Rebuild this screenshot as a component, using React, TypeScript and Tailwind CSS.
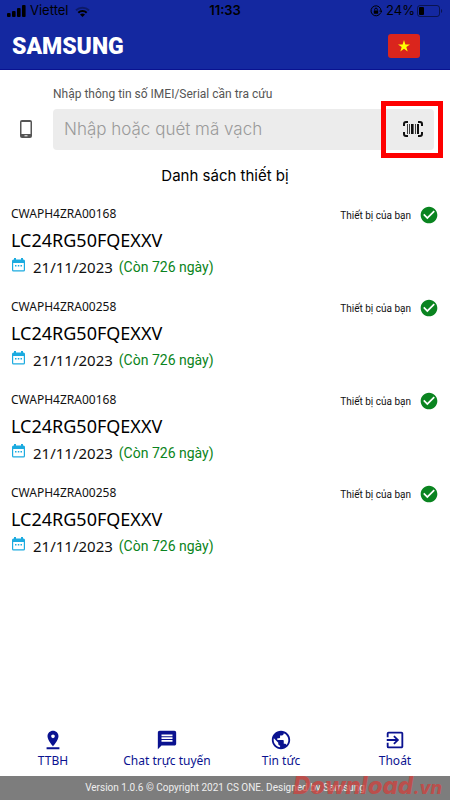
import { MdCheckCircle, MdExitToApp, MdMessage, MdPinDrop, MdPublic } from 'react-icons/md'

const devices = [
  { serial: 'CWAPH4ZRA00168', model: 'LC24RG50FQEXXV', date: '21/11/2023', left: 726 },
  { serial: 'CWAPH4ZRA00258', model: 'LC24RG50FQEXXV', date: '21/11/2023', left: 726 },
  { serial: 'CWAPH4ZRA00168', model: 'LC24RG50FQEXXV', date: '21/11/2023', left: 726 },
  { serial: 'CWAPH4ZRA00258', model: 'LC24RG50FQEXXV', date: '21/11/2023', left: 726 },
]

const tabs = [
  { label: 'TTBH', Icon: MdPinDrop },
  { label: 'Chat trực tuyến', Icon: MdMessage },
  { label: 'Tin tức', Icon: MdPublic },
  { label: 'Thoát', Icon: MdExitToApp },
]

const StatusBar = () => (
  <div className="grid grid-cols-[1fr_auto_1fr] items-center px-[7px] h-[22px] text-black font-['Inter',sans-serif] text-[13px]">
    <div className="flex items-center gap-1">
      <svg width="19" height="12" viewBox="0 0 19 12" fill="currentColor">
        <rect x="0" y="8" width="3.6" height="4" rx="1" />
        <rect x="5" y="6" width="3.6" height="6" rx="1" />
        <rect x="10" y="3" width="3.6" height="9" rx="1" />
        <rect x="15" y="0" width="3.6" height="12" rx="1" />
      </svg>
      <span>Viettel</span>
      <svg className="ml-0.5" width="15" height="11" viewBox="0 0 15 11" fill="none" stroke="currentColor" strokeWidth="2">
        <path d="M1 4.2a9.5 9.5 0 0 1 13 0" opacity=".35" />
        <path d="M3.3 6.8a6 6 0 0 1 8.4 0" />
        <path d="M7.5 11 5 8.6a3.6 3.6 0 0 1 5 0z" fill="currentColor" stroke="none" />
      </svg>
    </div>
    <span className="font-semibold">11:33</span>
    <div className="flex items-center justify-end">
      <svg className="mr-1" width="12" height="12" viewBox="0 0 12 12" fill="none" stroke="currentColor">
        <path d="M10.5 8A5 5 0 1 1 11 6M9.3 5.6 11 7.4l1-2" />
        <rect x="3.8" y="5.4" width="4.4" height="3.4" rx=".5" fill="currentColor" stroke="none" />
        <path d="M4.7 5.5V4.4a1.3 1.3 0 0 1 2.6 0v1.1" />
      </svg>
      <span className="mr-0.5">24%</span>
      <svg width="26" height="12" viewBox="0 0 26 12" fill="none">
        <rect x=".5" y=".5" width="22" height="11" rx="2.5" stroke="currentColor" opacity=".5" />
        <rect x="2" y="2" width="5" height="8" rx="1" fill="currentColor" />
        <path d="M24 4v4c1.6-.6 1.6-3.4 0-4z" fill="currentColor" opacity=".5" />
      </svg>
    </div>
  </div>
)

const Flag = () => (
  <svg width="32" height="24" viewBox="0 0 32 24">
    <rect width="32" height="24" rx="3" fill="#da251d" />
    <path fill="#ff0" d="m16 6 1.4 4.4H22l-3.7 2.7 1.4 4.4L16 14.8l-3.7 2.7 1.4-4.4-3.7-2.7h4.6z" />
  </svg>
)

const PhoneIcon = () => (
  <svg width="12" height="18" viewBox="0 0 12 18">
    <rect width="12" height="18" rx="2" fill="#555" />
    <rect x="1.5" y="2" width="9" height="12" fill="#fff" />
    <path d="M4.5 15.8h3" stroke="#fff" />
  </svg>
)

const ScanIcon = () => (
  <svg width="20" height="16" viewBox="0 0 20 16" fill="none" stroke="#111">
    <path strokeWidth="2" d="M5 1H3a2 2 0 0 0-2 2v2M15 1h2a2 2 0 0 1 2 2v2M5 15H3a2 2 0 0 1-2-2v-2M15 15h2a2 2 0 0 0 2-2v-2" />
    <path d="M4.5 3v10M6.5 3v10M12.5 3v10" opacity=".8" />
    <path strokeWidth="2" d="M9 3v10M15 3v10" />
    <path d="M10.5 3v10" opacity=".6" />
  </svg>
)

const CalendarIcon = () => (
  <svg className="mt-0.5 self-start" width="13" height="14" viewBox="0 0 13 14">
    <path fill="#1cabe0" fillRule="evenodd" d="M2 0h2v1.5h5V0h2v1.5h.5A1.5 1.5 0 0 1 13 3v9a1.5 1.5 0 0 1-1.5 1.500h-10A1.5 1.5 0 0 1 0 12V3a1.5 1.5 0 0 1 1.5-1.5H2zM1.2 5v7.300h10.600V5z" />
    <path fill="#1cabe0" d="M3 7h1.5v1.5H3zM5.8 7h1.5v1.5H5.8zM8.5 7H10v1.5H8.5z" />
  </svg>
)

const Device = ({ serial, model, date, left }: (typeof devices)[number]) => (
  <li className="flex h-[93px] items-start justify-between">
    <div>
      <p className="text-xs leading-5">{serial}</p>
      <h2 className="text-lg leading-8 text-black">{model}</h2>
      <p className="flex items-center pl-px text-[15px] leading-[22px]">
        <CalendarIcon />
        <span className="ml-2">{date}</span>
        <span className="ml-1.5 font-['Roboto',sans-serif] text-sm leading-[22px] text-[#0a8420]">(Còn {left} ngày)</span>
      </p>
    </div>
    <div className="flex items-center gap-2 font-['Roboto',sans-serif] text-[10px] leading-5">
      <span className="pt-0.5">Thiết bị của bạn</span>
      <MdCheckCircle size={20} color="#0a8420" />
    </div>
  </li>
)

const App = () => {
  return (
    <div className="flex min-h-screen flex-col bg-white text-[#111] font-['Noto_Sans',sans-serif]">
      <header className="h-[70px] bg-[#1428a0] border-b border-[#0a1290]">
        <StatusBar />
        <div className="flex h-[47px] items-center justify-between pl-3 pr-[30px]">
          <span className="pt-1 font-['Roboto',sans-serif] text-[23px] font-black text-white">SAMSUNG</span>
          <button aria-label="Tiếng Việt"><Flag /></button>
        </div>
      </header>

      <main className="flex-1">
        <form className="pl-5 pr-[7px] pt-4">
          <label htmlFor="imei" className="block pl-[33px] font-['Roboto',sans-serif] text-xs leading-4 text-[#555]">
            Nhập thông tin số IMEI/Serial cần tra cứu
          </label>
          <div className="flex h-[54px] items-center">
            <PhoneIcon />
            <input
              id="imei"
              placeholder="Nhập hoặc quét mã vạch"
              className="ml-[21px] h-[41px] min-w-0 flex-1 rounded-l-sm bg-[#ececec] px-[11px] font-['Inter',sans-serif] text-[17px] font-light placeholder:text-[#9a9a9a] focus:outline-none"
            />
            <button type="button" aria-label="Quét mã vạch" className="h-[57px] w-[62px] shrink-0 border-5 border-[#fe0000] bg-white py-[3px] pr-1">
              <span className="flex h-full items-center justify-center rounded-r-sm bg-[#ececec] pl-1.5">
                <ScanIcon />
              </span>
            </button>
          </div>
        </form>

        <h1 className="pt-2 text-center font-['Inter',sans-serif] text-[15px] leading-6 text-black">Danh sách thiết bị</h1>
        <ul className="px-[11px] pt-4">
          {devices.map((device, i) => <Device key={i} {...device} />)}
        </ul>
      </main>

      <nav className="flex justify-between pb-[5px] pl-2 pr-2.5 text-[#0a1290]">
        {tabs.map(({ label, Icon }) => (
          <button key={label} className="flex w-[90px] flex-col items-center text-xs leading-5">
            <Icon size={22} />
            {label}
          </button>
        ))}
      </nav>
      <footer className="relative h-6 bg-[#7d7d7d] text-center font-['Roboto',sans-serif] text-[10px] leading-6 text-[#eee]">
        Version 1.0.6 © Copyright 2021 CS ONE. Designed by Samsung
        <span className="absolute right-2 top-0 font-['Inter',sans-serif] text-2xl leading-5 font-extrabold italic text-[#d0403c]/75">
          Download<span className="text-lg leading-5">.vn</span>
        </span>
      </footer>
    </div>
  )
}

export default App
